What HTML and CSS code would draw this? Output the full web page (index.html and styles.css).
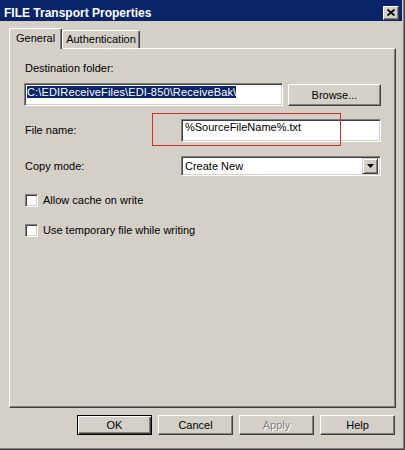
FILE: index.html
```html
<!DOCTYPE html>
<html lang="en">
<head>
  <meta charset="UTF-8" />
  <title>FILE Transport Properties</title>
  <link rel="stylesheet" href="styles.css">
</head>
<body>
  <div class="window">
    <div class="titlebar">
      <span class="title">FILE Transport Properties</span>
      <span class="close">
        <svg width="8" height="7" viewBox="0 0 8 7">
          <path d="M0.5 0.5 L7.5 6.5 M7.5 0.5 L0.5 6.5" stroke="#000" stroke-width="1.7" fill="none"/>
        </svg>
      </span>
    </div>

    <div class="content">
      <div class="tabs">
        <div class="tab active">General</div>
        <div class="tab">Authentication</div>
      </div>

      <div class="panel">
        <div class="label">Destination folder:</div>
        <div class="row first">
          <div class="field wide"><span class="selected">C:\EDIReceiveFiles\EDI-850\ReceiveBak\</span></div>
          <div class="button browse">Browse...</div>
        </div>

        <div class="row labeled filename">
          <div class="label">File name:</div>
          <div class="field short">%SourceFileName%.txt</div>
          <div class="marker"></div>
        </div>

        <div class="row labeled copymode">
          <div class="label">Copy mode:</div>
          <div class="field short select">
            <span>Create New</span>
            <span class="dropdown">
              <svg width="7" height="4" viewBox="0 0 7 4"><polygon points="0,0 7,0 3.5,4" fill="#000"/></svg>
            </span>
          </div>
        </div>

        <div class="check first-check">
          <span class="box"></span>
          <span>Allow cache on write</span>
        </div>
        <div class="check">
          <span class="box"></span>
          <span>Use temporary file while writing</span>
        </div>
      </div>

      <div class="actions">
        <div class="button default">OK</div>
        <div class="button">Cancel</div>
        <div class="button disabled">Apply</div>
        <div class="button">Help</div>
      </div>
    </div>
  </div>
</body>
</html>
```

FILE: styles.css
```css
body {
  margin: 0;
  padding: 0;
  font-family: "Liberation Sans", Arial, sans-serif;
  font-size: 11px;
  color: #000;
  background: #d4d0c8;
}

.window {
  width: 405px;
  height: 450px;
  box-sizing: border-box;
  padding: 0 3px 3px 0;
  background: #d4d0c8;
  box-shadow: inset -1px -1px 0 #404040, inset -2px -2px 0 #808080;
  display: flex;
  flex-direction: column;
}

.titlebar {
  height: 21px;
  box-sizing: border-box;
  padding: 4px 3px 0 4px;
  background: #0a246a;
  display: flex;
  align-items: center;
  justify-content: space-between;
}

.title {
  color: #fff;
  font-weight: bold;
  font-size: 12px;
}

.close {
  width: 16px;
  height: 14px;
  box-sizing: border-box;
  background: #d4d0c8;
  border: 1px solid;
  border-color: #fff #404040 #404040 #fff;
  box-shadow: inset -1px -1px 0 #808080;
  display: flex;
  align-items: center;
  justify-content: center;
}

.content {
  flex: 1;
  padding: 7px 6px 0 9px;
  display: flex;
  flex-direction: column;
}

.tabs {
  display: flex;
  align-items: flex-end;
  height: 21px;
  margin-bottom: -1px;
}

.tab {
  height: 18px;
  box-sizing: border-box;
  padding: 0 3px;
  line-height: 17px;
  border: 1px solid;
  border-bottom: none;
  border-color: #fff #404040 #fff #fff;
  border-radius: 2px 2px 0 0;
  box-shadow: inset -1px 0 0 #808080;
  margin-bottom: 1px;
}

.tab.active {
  height: 21px;
  line-height: 19px;
  padding: 0 6px;
  margin-bottom: 0;
  background: #d4d0c8;
  position: relative;
  z-index: 1;
}

.panel {
  height: 360px;
  box-sizing: border-box;
  padding: 13px 14px 0 14px;
  border: 1px solid;
  border-color: #fff #404040 #404040 #fff;
  box-shadow: inset -1px -1px 0 #808080;
}

.label {
  line-height: 13px;
  padding-left: 1px;
}

.row {
  display: flex;
  align-items: flex-start;
  gap: 5px;
}

.row.first {
  margin-top: 8px;
}

.row.labeled {
  align-items: center;
  position: relative;
}

.row.labeled .label {
  flex: 1;
}

.row.filename {
  margin-top: 13px;
}

.row.copymode {
  margin-top: 14px;
}

.field {
  height: 23px;
  box-sizing: border-box;
  background: #fff;
  border: 1px solid;
  border-color: #808080 #fff #fff #808080;
  box-shadow: inset 1px 1px 0 #404040, inset -1px -1px 0 #d4d0c8;
  padding: 1px 2px 0 2px;
  line-height: 13px;
  white-space: nowrap;
  overflow: hidden;
}

.field.wide {
  flex: 1;
  padding-top: 2px;
}

.field.short {
  width: 200px;
  padding-left: 3px;
}

.selected {
  background: #0a246a;
  color: #fff;
  letter-spacing: 0.15px;
}

.field.select {
  height: 20px;
  padding: 2px 2px 2px 3px;
  display: flex;
  align-items: center;
  justify-content: space-between;
}

.dropdown {
  width: 16px;
  height: 16px;
  box-sizing: border-box;
  background: #d4d0c8;
  border: 1px solid;
  border-color: #d4d0c8 #404040 #404040 #d4d0c8;
  box-shadow: inset 1px 1px 0 #fff, inset -1px -1px 0 #808080;
  display: flex;
  align-items: center;
  justify-content: center;
}

.marker {
  position: absolute;
  left: 128px;
  top: -6px;
  width: 189px;
  height: 33px;
  box-sizing: border-box;
  border: 1px solid #d03030;
}

.check {
  display: flex;
  align-items: center;
  gap: 5px;
  margin-top: 17px;
  padding-left: 1px;
  line-height: 13px;
}

.check.first-check {
  margin-top: 18px;
}

.box {
  width: 13px;
  height: 13px;
  box-sizing: border-box;
  background: #fff;
  border: 1px solid;
  border-color: #808080 #fff #fff #808080;
  box-shadow: inset 1px 1px 0 #404040, inset -1px -1px 0 #d4d0c8;
}

.button {
  width: 75px;
  height: 20px;
  box-sizing: border-box;
  background: #d4d0c8;
  border: 1px solid;
  border-color: #fff #404040 #404040 #fff;
  box-shadow: inset -1px -1px 0 #808080;
  display: flex;
  align-items: center;
  justify-content: center;
}

.button.browse {
  width: 93px;
  height: 22px;
  margin-top: 1px;
}

.button.default {
  border-color: #000;
  box-shadow: inset 1px 1px 0 #fff, inset -1px -1px 0 #404040, inset -2px -2px 0 #808080;
}

.button.disabled {
  color: #808080;
  text-shadow: 1px 1px 0 #fff;
}

.actions {
  display: flex;
  justify-content: flex-end;
  gap: 6px;
  margin-top: 7px;
  padding-right: 1px;
}
```
